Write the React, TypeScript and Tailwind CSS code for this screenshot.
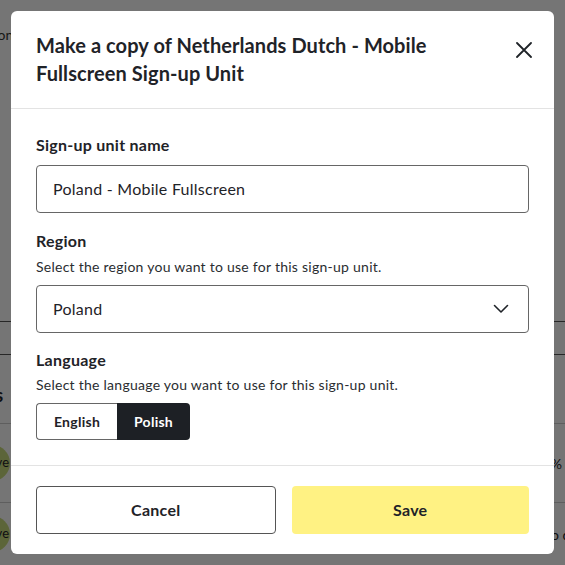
import React from "react";

const font = { fontFamily: "Lato, 'Noto Sans', sans-serif" };

function BackgroundPage() {
  return (
    <div className="w-[565px] h-[565px] overflow-hidden bg-white text-[#1f2328]" style={font}>
      <div className="h-[321px] pt-[24px]">
        <div className="ml-[-58px] text-[14px] text-[#333]">Description</div>
      </div>
      <div className="h-[34px] border-y border-[#555] flex items-center">
        <div className="ml-[-30px] text-[14px] text-[#333]">Sign</div>
      </div>
      <div className="h-[69px] border-b border-[#ccc] flex items-end pb-[14px]">
        <div className="ml-[-60px] text-[18px] font-bold">Regions</div>
      </div>
      <div className="h-[79px] border-b border-[#ccc] flex items-center justify-between">
        <div className="ml-[-26px] w-[36px] h-[36px] rounded-full bg-[#c9dc7c] flex items-center justify-end pr-[1px] text-[13px]">Live</div>
        <div className="mr-[3px] text-[14px]">40%</div>
      </div>
      <div className="h-[62px] flex items-center">
        <div className="ml-[-26px] w-[36px] h-[36px] rounded-full bg-[#c9dc7c] flex items-center justify-end pr-[1px] text-[13px]">Live</div>
        <div className="ml-[47px] w-[24px] h-[16px] rounded-[3px] bg-[#1a2a6c]"></div>
        <div className="ml-[4px] text-[14px]">NZ</div>
        <div className="ml-[56px] text-[14px]">English (NZ)</div>
        <div className="ml-[30px] w-[70px] h-[10px] bg-[#e5e5e5]"></div>
        <div className="ml-auto mr-[-40px] text-[14px]">No data to display</div>
      </div>
    </div>
  );
}

function CloseIcon() {
  return (
    <svg width="16" height="16" viewBox="0 0 16 16" fill="none" stroke="#1f2328" strokeWidth="1.8" strokeLinecap="round">
      <path d="M1 1L15 15M15 1L1 15" />
    </svg>
  );
}

function Chevron() {
  return (
    <svg width="16" height="10" viewBox="0 0 16 10" fill="none" stroke="#1f2328" strokeWidth="1.6" strokeLinecap="round" strokeLinejoin="round">
      <path d="M1.5 1.5L8 8L14.5 1.5" />
    </svg>
  );
}

export default function App() {
  return (
    <div className="relative w-[565px] h-[565px] overflow-hidden">
      <BackgroundPage />
      <div className="absolute inset-0 bg-black/[0.54]" />
      <div
        className="absolute left-[11px] top-[11px] w-[543px] h-[543px] bg-white rounded-[6px] flex flex-col text-[#1f2328] tracking-[0.016em]"
        style={font}
      >
        <div className="px-[25px] pt-[20px] pb-[21px] border-b border-[#e3e3e3] flex items-start justify-between">
          <h2 className="w-[440px] text-[20px] leading-[28px] font-bold tracking-[0.004em]">
            Make a copy of Netherlands Dutch - Mobile Fullscreen Sign-up Unit
          </h2>
          <button className="mt-[11px] mr-[-3px]">
            <CloseIcon />
          </button>
        </div>

        <div className="px-[25px] pt-[24px] pb-[24px] flex flex-col flex-1">
          <div className="text-[16px] leading-[24px] font-bold">Sign-up unit name</div>
          <div className="mt-[8px] h-[48px] rounded-[4px] border border-[#666] flex items-center px-[16px] text-[16px]">
            Poland - Mobile Fullscreen
          </div>

          <div className="mt-[16px] text-[16px] leading-[24px] font-bold">Region</div>
          <div className="mt-[4px] text-[14px] leading-[20px] text-[#2a2d31]">
            Select the region you want to use for this sign-up unit.
          </div>
          <div className="mt-[8px] h-[48px] rounded-[4px] border border-[#666] flex items-center justify-between px-[16px] text-[16px]">
            <span>Poland</span>
            <span className="mr-[3px] flex items-center">
              <Chevron />
            </span>
          </div>

          <div className="mt-[15px] text-[16px] leading-[24px] font-bold">Language</div>
          <div className="mt-[3px] text-[14px] leading-[20px] text-[#2a2d31]">
            Select the language you want to use for this sign-up unit.
          </div>
          <div className="mt-[8px] flex">
            <div className="h-[37px] w-[81px] rounded-l-[4px] border border-r-0 border-[#666] flex items-center justify-center text-[14px] font-bold">
              English
            </div>
            <div className="h-[37px] w-[73px] rounded-r-[4px] bg-[#1d2025] text-white flex items-center justify-center text-[14px] font-bold">
              Polish
            </div>
          </div>
        </div>

        <div className="border-t border-[#e3e3e3] px-[25px] pt-[20px] pb-[20px] flex gap-[16px]">
          <button className="flex-1 h-[48px] rounded-[4px] border border-[#555] text-[16px] font-bold">
            Cancel
          </button>
          <button className="flex-1 h-[48px] rounded-[4px] bg-[#fff283] text-[16px] font-bold">
            Save
          </button>
        </div>
      </div>
    </div>
  );
}
